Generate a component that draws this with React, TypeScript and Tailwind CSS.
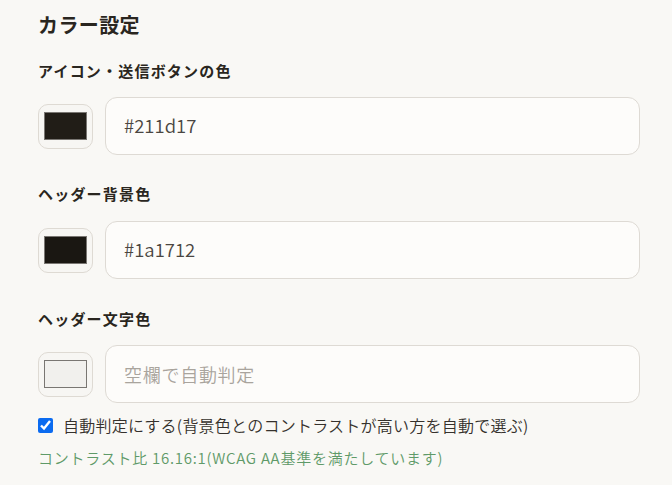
import React from "react";

const font = { fontFamily: '"Noto Sans CJK JP", "Noto Sans", sans-serif' };

function ColorRow({ swatch, value, placeholder }: { swatch: string; value?: string; placeholder?: string }) {
  return (
    <div className="flex items-center gap-3 h-[58px]">
      <div className="w-[55px] h-[45px] shrink-0 rounded-[10px] border border-[#dedad3] bg-[#f7f6f3] flex items-center justify-center">
        <div className="w-[43px] h-[28px] border border-[#797672]" style={{ background: swatch }} />
      </div>
      <div className="flex-1 h-[58px] rounded-[12px] border border-[#dedad4] bg-[#fdfcfa] flex items-center px-[18px]">
        {value ? (
          <span className="text-[18.5px] font-[350] text-[#4a4641]">{value}</span>
        ) : (
          <span className="text-[18px] font-[350] text-[#a9a49d] tracking-[0.04em]">{placeholder}</span>
        )}
      </div>
    </div>
  );
}

export default function App() {
  return (
    <div className="min-h-[485px] w-[672px] bg-[#f9f8f5] pl-[38px] pr-[32px] pt-[10px]" style={font}>
      <h2 className="text-[20px] leading-[30px] font-bold text-[#2a2620] tracking-[0.02em]">カラー設定</h2>

      <div className="mt-[20px] text-[15px] leading-[22px] font-bold text-[#2a2620] tracking-[0.08em]">アイコン・送信ボタンの色</div>
      <div className="mt-[15px]">
        <ColorRow swatch="#211d17" value="#211d17" />
      </div>

      <div className="mt-[28px] text-[15px] leading-[22px] font-bold text-[#2a2620] tracking-[0.08em]">ヘッダー背景色</div>
      <div className="mt-[16px]">
        <ColorRow swatch="#1a1712" value="#1a1712" />
      </div>

      <div className="mt-[29px] text-[15px] leading-[22px] font-bold text-[#2a2620] tracking-[0.08em]">ヘッダー文字色</div>
      <div className="mt-[15px]">
        <ColorRow swatch="#f1f0ed" placeholder="空欄で自動判定" />
      </div>

      <label className="mt-[10px] flex items-center gap-[10px] h-[24px] text-[16px] font-[350] text-[#35312c] tracking-[0.015em]">
        <input type="checkbox" defaultChecked className="w-[15px] h-[15px] m-0 accent-[#0b6bf0]" />
        <span>自動判定にする(背景色とのコントラストが高い方を自動で選ぶ)</span>
      </label>

      <div className="mt-[10px] text-[15px] leading-[22px] font-[350] text-[#5f9a68] tracking-[0.05em]">
        コントラスト比 16.16:1(WCAG AA基準を満たしています)
      </div>
    </div>
  );
}
